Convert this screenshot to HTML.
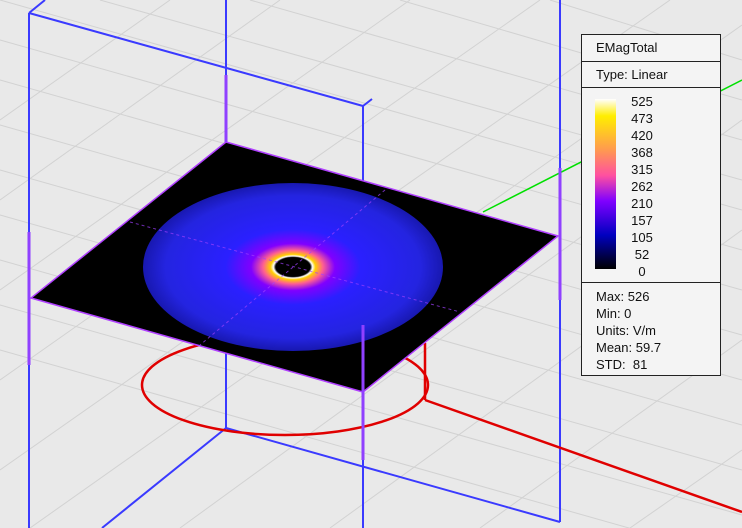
<!DOCTYPE html>
<html><head><style>
html,body{margin:0;width:742px;height:528px;overflow:hidden;background:#e9e9e9;font-family:"Liberation Sans",sans-serif}
#lg{position:absolute;left:581px;top:34px;width:138px;height:340px;background:#f4f4f4;border:1px solid #222;font-size:13px;color:#111;box-sizing:content-box}
.r{border-bottom:1px solid #222;padding-left:14px}
.lab{position:absolute;left:40px;width:40px;text-align:center;line-height:17px}
</style></head><body>
<svg width="742" height="528" style="position:absolute;left:0;top:0;display:block">
<defs>
<radialGradient id="g" cx="0.5" cy="0.5" r="0.5">
<stop offset="0" stop-color="#000"/><stop offset="0.115" stop-color="#000"/>
<stop offset="0.13" stop-color="#fff"/><stop offset="0.15" stop-color="#ffd000"/>
<stop offset="0.2" stop-color="#ff6090"/><stop offset="0.28" stop-color="#8000ff"/>
<stop offset="0.45" stop-color="#2a20ff"/><stop offset="0.85" stop-color="#2424e0"/><stop offset="1" stop-color="#1818b0"/>
</radialGradient>
</defs>
<g stroke="#d2d2d2" stroke-width="1" fill="none">
<path d="M0 40L742 250M0 80L742 290M0 125L742 335M0 170L742 380M0 215L742 425M0 260L742 470M0 305L742 515M0 350L742 560M0 0L742 210M100 0L742 180M250 0L742 140M400 0L742 100M550 0L742 60"/>
<path d="M0 120L170 0M0 200L280 0M0 290L410 0M0 380L540 0M0 470L670 0M30 528L742 25M180 528L742 120M330 528L742 230M480 528L742 340M630 528L742 450"/>
</g>
<g stroke="#3a3aff" stroke-width="2" fill="none">
<path d="M29 13V528M226 0V428M363 106V528M560 0V522M29 13L363 106M29 13L45 0M363 106L372 99M226 428L102 528M226 428L560 522"/>
</g>
<g stroke="#e00000" stroke-width="2.5" fill="none">
<ellipse cx="285" cy="385" rx="143" ry="50"/>
<path d="M425 343V400M425 400L742 512"/>
</g>
<path d="M483 212L742 80" stroke="#00e000" stroke-width="1.5"/>
<polygon points="226,142 558,236 363,392 31,298" fill="#000" stroke="#b040ff" stroke-width="1.5"/>
<ellipse cx="293" cy="267" rx="150" ry="84" fill="url(#g)"/>
<path d="M130 222L460 312M385 190L200 345" stroke="#a040ff" stroke-width="1" stroke-dasharray="3 3" opacity=".7"/>
<g stroke="#9040ff" stroke-width="3">
<path d="M29 232V365M226 75V142M363 325V460M560 168V300"/>
</g>
</svg>
<div id="lg">
<div class="r" style="height:26px;line-height:26px">EMagTotal</div>
<div class="r" style="height:25px;line-height:25px">Type: Linear</div>
<div class="r" style="height:194px;position:relative">
<div style="position:absolute;left:13px;top:11px;width:21px;height:170px;background:linear-gradient(#fff,#ffee00 10%,#ff9950 30%,#ff50a0 45%,#8000ff 60%,#0000c0 80%,#000)"></div>
<div class="lab" style="top:5px">525<br>473<br>420<br>368<br>315<br>262<br>210<br>157<br>105<br>52<br>0</div>
</div>
<div style="padding:5px 0 0 14px;line-height:17px">Max: 526<br>Min: 0<br>Units: V/m<br>Mean: 59.7<br>STD:&nbsp; 81</div>
</div>
</body></html>
